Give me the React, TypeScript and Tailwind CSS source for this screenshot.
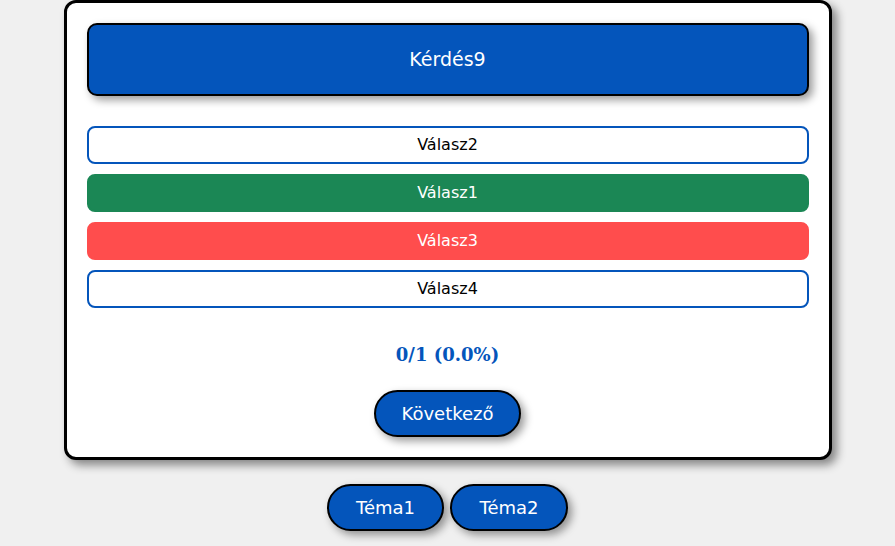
export default function App() {
  const answers = [
    { label: 'Válasz2', cls: 'bg-white text-black border-2 border-[#0455bb]' },
    { label: 'Válasz1', cls: 'bg-[#1b8755] text-white border-2 border-[#1b8755]' },
    { label: 'Válasz3', cls: 'bg-[#ff4d4d] text-white border-2 border-[#ff4d4d]' },
    { label: 'Válasz4', cls: 'bg-white text-black border-2 border-[#0455bb]' },
  ];

  return (
    <div className="min-h-screen bg-[#f0f0f0] font-['DejaVu_Sans',Verdana,sans-serif] flex flex-col items-center">
      <div className="w-[768px] bg-white border-[3px] border-black rounded-[12px] shadow-[5px_5px_10px_rgba(0,0,0,0.45)] p-[20px]">
        <div className="h-[73px] bg-[#0455bb] border-2 border-black rounded-[10px] shadow-[4px_4px_8px_rgba(0,0,0,0.4)] flex items-center justify-center text-white text-[19px]">
          Kérdés9
        </div>

        <div className="mt-[30px] flex flex-col gap-[10px]">
          {answers.map((a) => (
            <div
              key={a.label}
              className={`h-[38px] rounded-[8px] flex items-center justify-center text-[16px] ${a.cls}`}
            >
              {a.label}
            </div>
          ))}
        </div>

        <div className="mt-[36px] text-center text-[18px] leading-[21px] font-bold text-[#0455bb] font-['DejaVu_Serif',Georgia,serif]">
          0/1 (0.0%)
        </div>

        <div className="mt-[25px] flex justify-center">
          <button className="h-[47px] px-[25px] rounded-full bg-[#0455bb] border-2 border-black text-white text-[18px] shadow-[4px_4px_8px_rgba(0,0,0,0.4)]">
            Következő
          </button>
        </div>
      </div>

      <div className="mt-[24px] flex gap-[6px]">
        <button className="h-[47px] w-[117px] rounded-full bg-[#0455bb] border-2 border-black text-white text-[18px] shadow-[4px_4px_8px_rgba(0,0,0,0.4)]">
          Téma1
        </button>
        <button className="h-[47px] w-[118px] rounded-full bg-[#0455bb] border-2 border-black text-white text-[18px] shadow-[4px_4px_8px_rgba(0,0,0,0.4)]">
          Téma2
        </button>
      </div>
    </div>
  );
}
